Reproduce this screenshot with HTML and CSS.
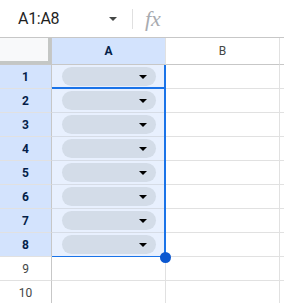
FILE: index.html
```html
<!DOCTYPE html>
<html lang="en">

<head>
    <meta charset="UTF-8">
    <meta name="viewport" content="width=device-width, initial-scale=1.0">
    <title>Sheet</title>
    <link rel="stylesheet" href="styles.css">
</head>

<body>
    <!-- Строка формул -->
    <div class="formula-bar">
        <div class="name-box">
            <span class="name-text">A1:A8</span>
            <span class="name-arrow"></span>
        </div>
        <span class="bar-sep"></span>
        <span class="fx">fx</span>
    </div>

    <!-- Сетка листа -->
    <div class="sheet">
        <div class="corner"></div>
        <div class="col-head active">A</div>
        <div class="col-head">B</div>
        <div class="col-rest head"></div>

        <div class="row-head active">1</div>
        <div class="cell sel"><div class="chip"><span class="chip-arrow"></span></div></div>
        <div class="cell"></div>
        <div class="col-rest"></div>

        <div class="row-head active">2</div>
        <div class="cell sel"><div class="chip"><span class="chip-arrow"></span></div></div>
        <div class="cell"></div>
        <div class="col-rest"></div>

        <div class="row-head active">3</div>
        <div class="cell sel"><div class="chip"><span class="chip-arrow"></span></div></div>
        <div class="cell"></div>
        <div class="col-rest"></div>

        <div class="row-head active">4</div>
        <div class="cell sel"><div class="chip"><span class="chip-arrow"></span></div></div>
        <div class="cell"></div>
        <div class="col-rest"></div>

        <div class="row-head active">5</div>
        <div class="cell sel"><div class="chip"><span class="chip-arrow"></span></div></div>
        <div class="cell"></div>
        <div class="col-rest"></div>

        <div class="row-head active">6</div>
        <div class="cell sel"><div class="chip"><span class="chip-arrow"></span></div></div>
        <div class="cell"></div>
        <div class="col-rest"></div>

        <div class="row-head active">7</div>
        <div class="cell sel"><div class="chip"><span class="chip-arrow"></span></div></div>
        <div class="cell"></div>
        <div class="col-rest"></div>

        <div class="row-head active">8</div>
        <div class="cell sel"><div class="chip"><span class="chip-arrow"></span></div></div>
        <div class="cell"></div>
        <div class="col-rest"></div>

        <div class="row-head">9</div>
        <div class="cell"></div>
        <div class="cell"></div>
        <div class="col-rest"></div>

        <div class="row-head">10</div>
        <div class="cell"></div>
        <div class="cell"></div>
        <div class="col-rest"></div>

        <!-- Выделение поверх сетки -->
        <div class="range"></div>
        <div class="active-cell"></div>
        <div class="fill-handle"></div>
    </div>
</body>

</html>
```

FILE: styles.css
```css
/* Общие стили */
body {
    margin: 0;
    width: 284px;
    height: 303px;
    overflow: hidden;
    background-color: #fff;
    font-family: Roboto, "Liberation Sans", sans-serif;
}

/* Строка формул */
.formula-bar {
    display: flex;
    align-items: center;
    height: 37px;
    border-bottom: 1px solid #c7c7c7;
}

.name-box {
    display: flex;
    align-items: center;
    width: 117px;
    padding-left: 18px;
    box-sizing: border-box;
}

.name-text {
    font-size: 16px;
    letter-spacing: -0.3px;
    color: #1f1f1f;
    flex: 1;
}

.name-arrow {
    width: 0;
    height: 0;
    border-left: 4px solid transparent;
    border-right: 4px solid transparent;
    border-top: 4px solid #444746;
}

.bar-sep {
    width: 1px;
    height: 20px;
    background-color: #e0e0e0;
    margin-left: 15px;
}

.fx {
    margin-left: 12px;
    font-family: "Liberation Serif", serif;
    font-style: italic;
    font-size: 22px;
    color: #a8abb0;
}

/* Сетка */
.sheet {
    position: relative;
    display: grid;
    grid-template-columns: 52px 114px 114px 4px;
    grid-template-rows: 27px repeat(10, 24px);
}

.sheet > div {
    box-sizing: border-box;
}

.corner {
    background-color: #f8f9fa;
    border-right: 1px solid #c7c7c7;
    border-bottom: 1px solid #c7c7c7;
    box-shadow: inset -3px -3px 0 #c4c7c5;
}

.col-head {
    display: flex;
    align-items: center;
    justify-content: center;
    font-size: 12px;
    color: #444746;
    border-right: 1px solid #e1e1e1;
    border-bottom: 1px solid #c7c7c7;
}

.col-head.active {
    background-color: #d3e3fd;
    color: #041e49;
    font-weight: bold;
}

.col-rest {
    border-bottom: 1px solid #e1e1e1;
}

.col-rest.head {
    border-bottom-color: #c7c7c7;
}

.row-head {
    display: flex;
    align-items: center;
    justify-content: center;
    font-size: 12px;
    color: #444746;
    border-right: 1px solid #c7c7c7;
    border-bottom: 1px solid #e1e1e1;
}

.row-head.active {
    background-color: #d3e3fd;
    color: #041e49;
    font-weight: bold;
}

.cell {
    display: flex;
    align-items: center;
    border-right: 1px solid #e1e1e1;
    border-bottom: 1px solid #e1e1e1;
}

.cell.sel {
    background-color: #e8f0fe;
    border-bottom-color: #d6dce6;
}

/* Выпадающий список */
.chip {
    display: flex;
    align-items: center;
    justify-content: flex-end;
    margin-left: 10px;
    width: 94px;
    height: 19px;
    border-radius: 10px;
    background-color: #d3dce8;
}

.chip-arrow {
    width: 0;
    height: 0;
    border-left: 4px solid transparent;
    border-right: 4px solid transparent;
    border-top: 4px solid #000;
    margin-right: 9px;
}

/* Выделение */
.range {
    position: absolute;
    left: 52px;
    top: 27px;
    width: 114px;
    height: 192px;
    border-right: 2px solid #1a73e8;
    border-bottom: 1px solid #1a73e8;
}

.active-cell {
    position: absolute;
    left: 52px;
    top: 27px;
    width: 114px;
    height: 24px;
    border-right: 2px solid #1a73e8;
    border-bottom: 2px solid #1a73e8;
}

.fill-handle {
    position: absolute;
    left: 160px;
    top: 214px;
    width: 11px;
    height: 11px;
    border-radius: 50%;
    background-color: #0b57d0;
}
```
